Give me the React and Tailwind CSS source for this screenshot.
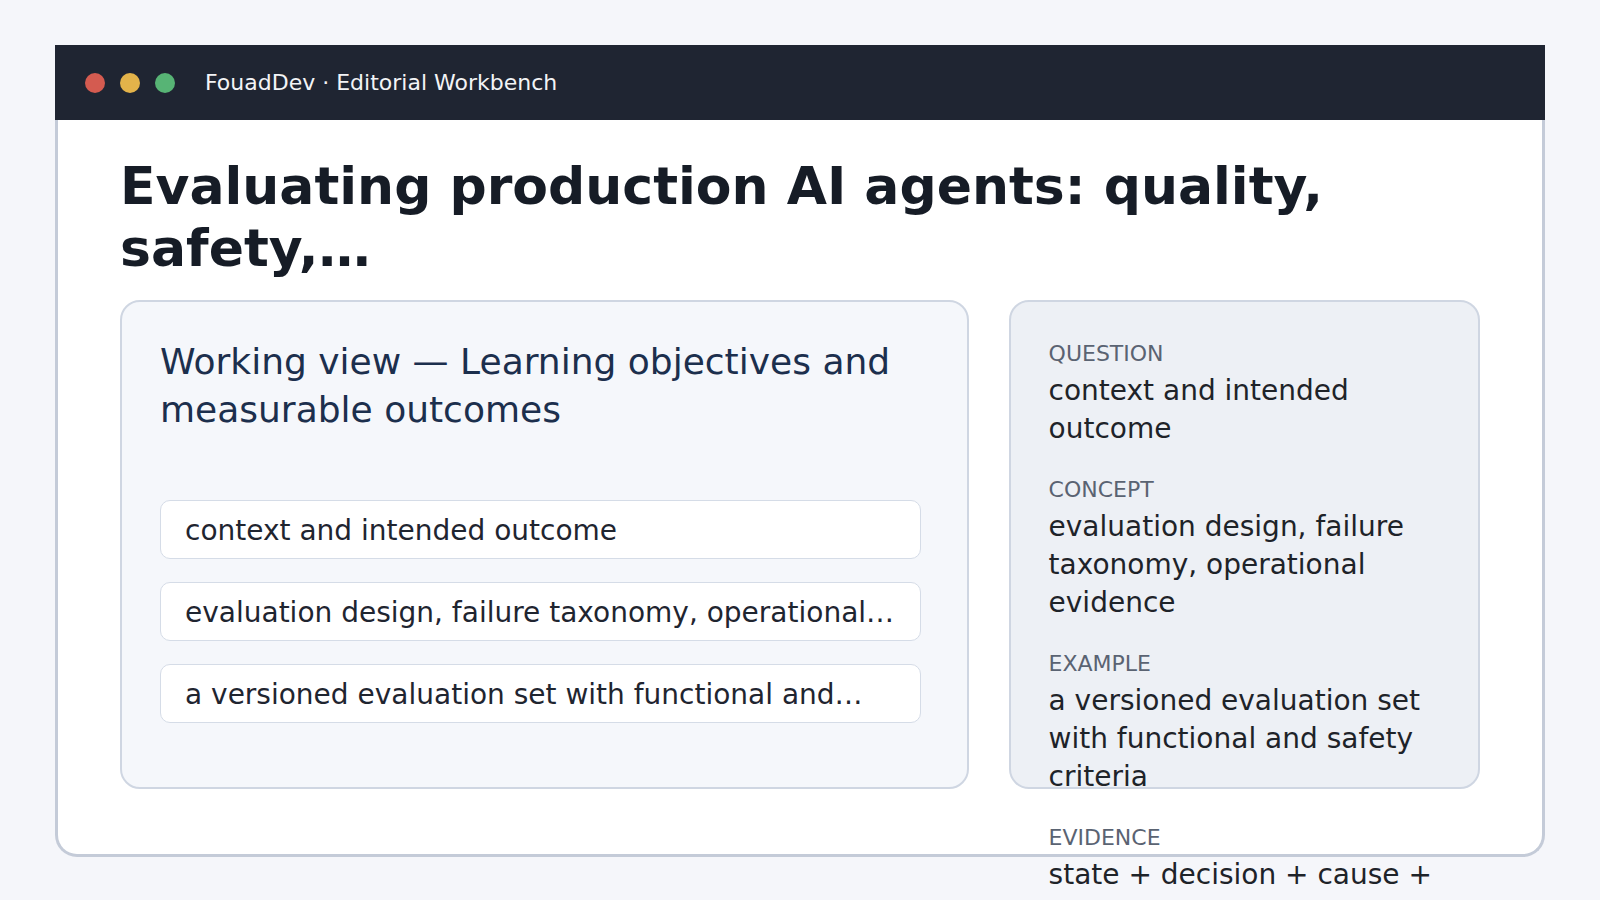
import React from 'react'

const items = [
  'context and intended outcome',
  'evaluation design, failure taxonomy, operational…',
  'a versioned evaluation set with functional and…',
]

const facts = [
  { label: 'Question', value: 'context and intended outcome' },
  { label: 'Concept', value: 'evaluation design, failure taxonomy, operational evidence' },
  { label: 'Example', value: 'a versioned evaluation set with functional and safety criteria' },
  { label: 'Evidence', value: 'state + decision + cause + next action' },
]

export default function App() {
  return (
    <div className="min-h-screen bg-[#f5f6fa] pt-[45px] font-['DejaVu_Sans',sans-serif]">
      <div className="mx-auto w-[1490px] h-[812px] flex flex-col">
        {/* window bar */}
        <div className="h-[75px] shrink-0 bg-[#1f2532] flex items-center pl-[30px]">
          <div className="flex gap-[15px]">
            <span className="w-[20px] h-[20px] rounded-full bg-[#d45b50]" />
            <span className="w-[20px] h-[20px] rounded-full bg-[#e3b34a]" />
            <span className="w-[20px] h-[20px] rounded-full bg-[#57b475]" />
          </div>
          <span className="ml-[30px] text-[22px] text-[#f3f4f6]">FouadDev · Editorial Workbench</span>
        </div>

        <div className="flex-1 bg-white border-[3px] border-t-0 border-[#c4cbd8] rounded-b-[22px] px-[62px] pt-[35px]">
          <h1 className="text-[52px] leading-[1.2] font-bold text-[#161c26]">
            Evaluating production AI agents: quality, safety,…
          </h1>

          <div className="mt-5 grid grid-cols-[minmax(0,1.8fr)_minmax(0,1fr)] gap-10 items-start">
            <div className="h-[489px] rounded-[20px] border-2 border-[#cfd6e2] bg-[#f5f7fb] px-[38px] py-9">
              <h2 className="text-[36px] leading-[48px] text-[#1c2f4d]">
                Working view — Learning objectives and measurable outcomes
              </h2>
              <div className="mt-[66px] mr-2 flex flex-col gap-[23px]">
                {items.map((t) => (
                  <div key={t} className="h-[59px] flex items-center px-6 pt-[4px] bg-white border border-[#d5dce7] rounded-[10px] min-w-0">
                    <span className="truncate text-[28px] text-[#1f2530]">{t}</span>
                  </div>
                ))}
              </div>
            </div>

            <div className="h-[489px] rounded-[20px] border-2 border-[#cfd6e2] bg-[#edf0f5] px-[38px] pt-[37px] flex flex-col gap-[27px]">
              {facts.map((f) => (
                <div key={f.label}>
                  <div className="uppercase text-[22px] leading-[30px] text-[#5a6372]">{f.label}</div>
                  <div className="mt-[3px] text-[28px] leading-[38px] text-[#1e2329]">{f.value}</div>
                </div>
              ))}
            </div>
          </div>
        </div>
      </div>
    </div>
  )
}
